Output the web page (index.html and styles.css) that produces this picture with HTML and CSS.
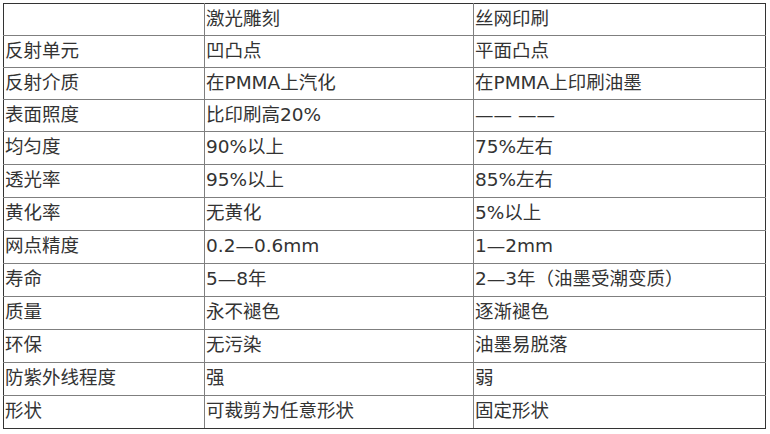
FILE: index.html
```html
<!DOCTYPE html>
<html lang="zh-CN">
<head>
<meta charset="utf-8">
<title>激光雕刻与丝网印刷对比</title>
<link rel="stylesheet" href="styles.css">
</head>
<body>
<table class="compare">
  <colgroup>
    <col class="c1"><col class="c2"><col class="c3">
  </colgroup>
  <tbody>
    <tr class="short"><td></td><td>激光雕刻</td><td>丝网印刷</td></tr>
    <tr class="short"><td>反射单元</td><td>凹凸点</td><td>平面凸点</td></tr>
    <tr class="short"><td>反射介质</td><td>在PMMA上汽化</td><td>在PMMA上印刷油墨</td></tr>
    <tr class="short"><td>表面照度</td><td>比印刷高20%</td><td>—— ——</td></tr>
    <tr><td>均匀度</td><td>90%以上</td><td>75%左右</td></tr>
    <tr><td>透光率</td><td>95%以上</td><td>85%左右</td></tr>
    <tr><td>黄化率</td><td>无黄化</td><td>5%以上</td></tr>
    <tr><td>网点精度</td><td>0.2—0.6mm</td><td>1—2mm</td></tr>
    <tr><td>寿命</td><td>5—8年</td><td>2—3年（油墨受潮变质）</td></tr>
    <tr><td>质量</td><td>永不褪色</td><td>逐渐褪色</td></tr>
    <tr><td>环保</td><td>无污染</td><td>油墨易脱落</td></tr>
    <tr><td>防紫外线程度</td><td>强</td><td>弱</td></tr>
    <tr><td>形状</td><td>可裁剪为任意形状</td><td>固定形状</td></tr>
  </tbody>
</table>
</body>
</html>
```

FILE: styles.css
```css
html, body {
  margin: 0;
  padding: 0;
  background: #ffffff;
}

body {
  padding: 3px;
}

.compare {
  border-collapse: collapse;
  table-layout: fixed;
  width: 762px;
  border: 1px solid #333333;
  font-family: "DejaVu Sans", "Noto Sans CJK SC", sans-serif;
  font-size: 18.5px;
  color: #333333;
}

.c1 { width: 201px; }
.c2 { width: 269px; }
.c3 { width: 292px; }

.compare td {
  border: 1px solid #7f7f7f;
  padding: 0 0 2px 1px;
  height: 30px;
  line-height: 22px;
  vertical-align: middle;
  white-space: nowrap;
  box-sizing: border-box;
}

.compare tr td {
  height: 33px;
}

.compare tr.short td {
  height: 32px;
}

.compare tr:first-child td {
  border-top-color: #333333;
}

.compare tr:last-child td {
  border-bottom-color: #333333;
}

.compare td:first-child {
  border-left-color: #333333;
}

.compare td:last-child {
  border-right-color: #333333;
}
```
